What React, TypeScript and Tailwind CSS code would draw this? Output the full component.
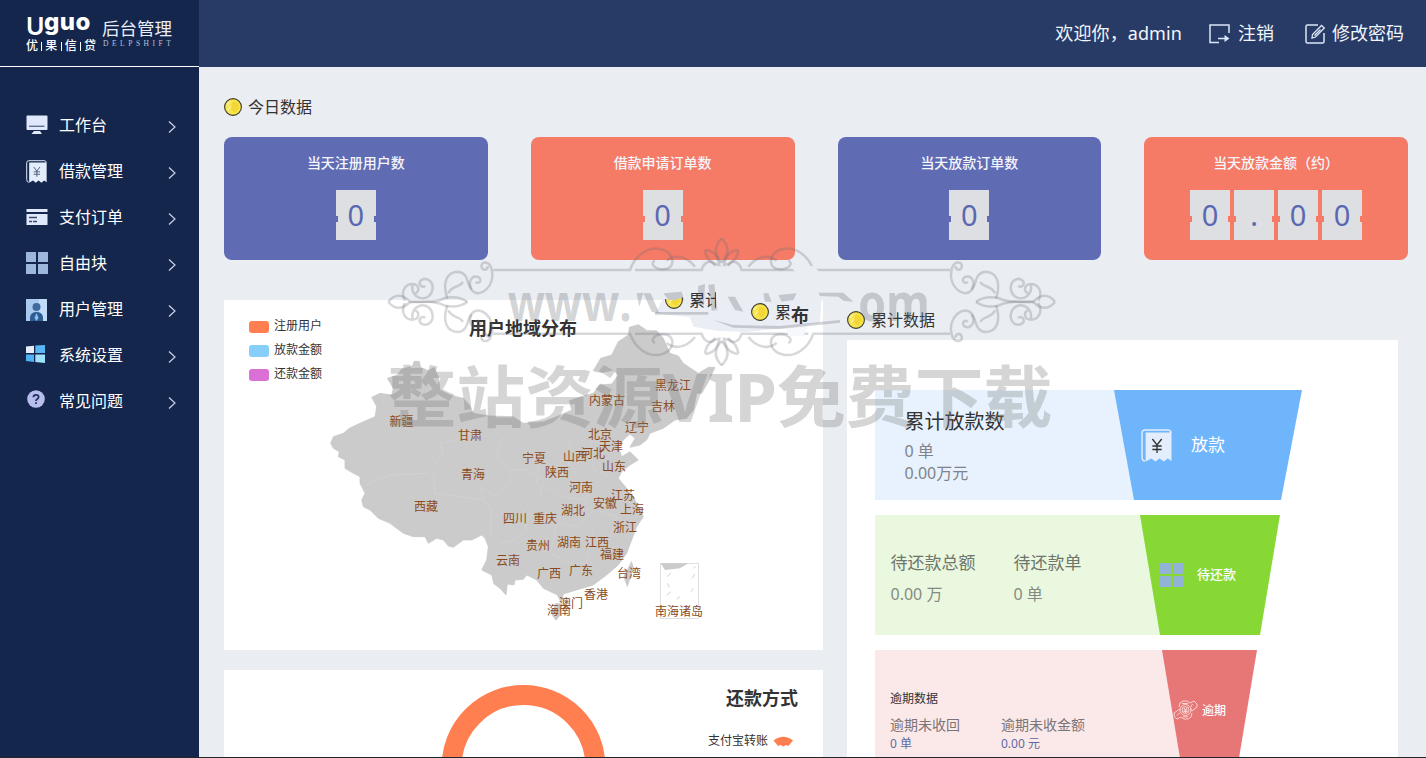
import React from "react";

type IconName = "monitor" | "receipt" | "card" | "blocks" | "user" | "windows" | "help";

const menu: { label: string; icon: IconName }[] = [
  { label: "工作台", icon: "monitor" },
  { label: "借款管理", icon: "receipt" },
  { label: "支付订单", icon: "card" },
  { label: "自由块", icon: "blocks" },
  { label: "用户管理", icon: "user" },
  { label: "系统设置", icon: "windows" },
  { label: "常见问题", icon: "help" },
];

function Receipt({ size, ink }: { size: number; ink: string }) {
  return (
    <svg width={size} height={size + 2} viewBox="0 0 30 33" preserveAspectRatio="none">
      <path d="M4 32 Q1 32 1 28 V4 Q1 1 4 1 H26 Q29 1 29 4" fill="none" stroke="#e3edfb" strokeWidth="1.4" />
      <path d="M4.500 3.500 H29.500 V32 L26 29.500 L22 32.500 L18 29.500 L14 32.500 L10 29.500 L4.500 32.500 Z" fill="#e3edfb" />
      <path d="M11 10 L15.500 16 L20 10 M15.500 16 V24 M11 17 H20 M11 20.500 H20" fill="none" stroke={ink} strokeWidth="1.3" />
    </svg>
  );
}

function MenuIcon({ name }: { name: IconName }) {
  switch (name) {
    case "monitor":
      return (
        <svg width="22" height="20" viewBox="0 0 22 20">
          <rect x="0.500" y="0.500" width="21" height="14.500" rx="1" fill="#dfe9fb" />
          <path d="M3 11.300 H18.500" stroke="#5f7395" strokeWidth="1.400" />
          <path d="M8 16 H14 L16 19 H5.500 Z" fill="#dfe9fb" />
        </svg>
      );
    case "receipt":
      return <Receipt size={21} ink="#4a5670" />;
    case "card":
      return (
        <svg width="22" height="18" viewBox="0 0 22 18">
          <rect x="0.500" y="1" width="21" height="3" fill="#dfe9fb" />
          <rect x="0.500" y="6" width="21" height="11" fill="#dfe9fb" />
          <path d="M3 9.500 H11 M3 13.500 H6 M7 13.500 H11" stroke="#3b4a6b" strokeWidth="1.500" />
        </svg>
      );
    case "blocks":
      return <Blocks size={22} color="#9cb6dc" />;
    case "user":
      return (
        <svg width="21" height="22" viewBox="0 0 21 22" className="mt-px">
          <rect width="21" height="22" fill="#a9c9ee" />
          <rect x="13" width="8" height="22" fill="#c2dbf6" />
          <circle cx="10.500" cy="8" r="4" fill="#3e6a9e" />
          <path d="M4 22 V18 Q5 13 10.500 13 Q16 13 17 18 V22 Z" fill="#2f5c93" />
          <path d="M10.500 14 L12.500 19 L10.500 22 L8.500 19 Z" fill="#8cc2f5" />
        </svg>
      );
    case "windows":
      return (
        <svg width="19" height="18" viewBox="0 0 19 18" className="-mt-[2px]">
          <path d="M0 1.500 L8 0.800 V8 H0 Z" fill="#e6eefb" />
          <path d="M9.300 0.600 L19 0 V8 H9.300 Z" fill="#59b7f5" />
          <path d="M0 9.500 H8 V17 L0 16 Z" fill="#4fb2f5" />
          <path d="M9.300 9.500 H19 V18 L9.300 17 Z" fill="#9fe0fb" />
        </svg>
      );
    case "help":
      return (
        <svg width="20" height="22" viewBox="0 0 20 22" className="-mt-[3px]">
          <circle cx="10" cy="10" r="8.800" fill="#b7bdec" />
          <path d="M7.400 8.300 Q7.400 5.800 10 5.800 Q12.600 5.800 12.600 8 Q12.600 9.300 11 10.200 Q10 10.800 10 12 M10 13.300 V15" fill="none" stroke="#25315f" strokeWidth="1.800" />
        </svg>
      );
  }
}

function Blocks({ size, color }: { size: number; color: string }) {
  return (
    <svg width={size} height={size} viewBox="0 0 22 22" fill={color}>
      <rect width="10" height="10" />
      <rect x="12" width="10" height="10" />
      <rect y="12" width="10" height="10" />
      <rect x="12" y="12" width="10" height="10" />
    </svg>
  );
}

function Coin() {
  return (
    <svg width="18" height="18" viewBox="0 0 18 18" className="shrink-0">
      <circle cx="9" cy="9" r="8.400" fill="#f8e44e" stroke="#3c3b2e" strokeWidth="1.100" />
      <path d="M9 3 L14 5 L15 10 L11 15 L6 11 Z" fill="#f4d735" />
      <path d="M3 7 L6 3.500 M4 12 L7 8" stroke="#faf0a0" strokeWidth="1.500" />
    </svg>
  );
}

const stats = [
  { label: "当天注册用户数", digits: ["0"], blue: true },
  { label: "借款申请订单数", digits: ["0"], blue: false },
  { label: "当天放款订单数", digits: ["0"], blue: true },
  { label: "当天放款金额（约）", digits: ["0", ".", "0", "0"], blue: false },
];

function StatCard({ label, digits, blue }: (typeof stats)[number]) {
  const notch = blue ? "mt-1 h-[6px] w-[2px] bg-[#5f6cb4]" : "mt-1 h-[6px] w-[2px] bg-[#f57b66]";
  return (
    <div className={blue ? "flex h-[123px] flex-col items-center rounded-lg bg-[#5f6cb4] pt-4" : "flex h-[123px] flex-col items-center rounded-lg bg-[#f57b66] pt-4"}>
      <div className="text-[14px] leading-5 font-medium text-[#f4f5fb]">{label}</div>
      <div className="mt-[17px] flex gap-1">
        {digits.map((d, i) => (
          <div key={i} className="flex h-[50px] w-10 items-center justify-between bg-[#dddfe2] pt-[3px] text-[29px] leading-none text-[#5a68b2]">
            <span className={notch} />
            <span className="-mt-[5px]">{d}</span>
            <span className={notch} />
          </div>
        ))}
      </div>
    </div>
  );
}

const provinces: [string, number, number][] = [
  ["新疆", 401.5, 421], ["甘肃", 470, 435], ["青海", 473, 474], ["西藏", 426, 506],
  ["宁夏", 534, 458], ["陕西", 557, 472], ["山西", 575, 456], ["河北", 593, 453],
  ["北京", 600, 434], ["天津", 611, 446], ["山东", 614, 466], ["河南", 581, 487],
  ["江苏", 623, 495], ["安徽", 605, 503], ["上海", 632, 509], ["湖北", 573, 510],
  ["四川", 515, 518], ["重庆", 545, 518], ["浙江", 625, 527], ["湖南", 569, 542],
  ["江西", 597, 542], ["贵州", 538, 545], ["福建", 612, 554], ["云南", 508, 560],
  ["广西", 549, 573], ["广东", 581, 570], ["台湾", 629, 573], ["香港", 596, 594],
  ["澳门", 571, 603], ["海南", 559, 610], ["南海诸岛", 679, 611], ["黑龙江", 673, 385],
  ["内蒙古", 607, 400], ["吉林", 663, 406], ["辽宁", 637, 427],
];

const mainland =
  "62,400 70,380 100,370 118,355 160,335 195,320 200,290 185,262 210,250 245,255 250,235 232,205 262,195 275,178 308,168 312,154 328,154 332,172 355,182 372,172 385,200 390,240 420,255 460,265 478,285 490,310 540,318 610,320 640,340 700,335 740,320 785,300 778,272 820,258 850,250 868,225 905,222 925,195 910,180 875,188 850,182 872,145 905,135 925,95 955,75 958,52 985,44 1012,62 1040,62 1060,85 1080,130 1105,138 1120,160 1165,190 1195,172 1215,172 1195,215 1175,250 1160,250 1150,300 1130,325 1095,330 1060,355 1020,370 1010,390 990,405 960,412 975,385 960,372 940,390 925,410 935,440 960,425 985,450 960,465 935,485 925,505 950,535 970,560 985,590 1000,620 980,650 965,690 950,730 925,765 890,795 850,825 800,840 760,852 755,880 742,855 700,835 680,810 650,795 640,808 615,810 612,825 592,822 588,855 570,835 552,822 545,795 515,780 530,750 535,710 525,685 515,675 485,690 460,690 430,712 415,708 400,690 380,685 355,700 345,680 310,680 280,670 240,640 205,625 180,600 160,590 155,570 165,550 150,520 150,500 130,490 105,475 105,450 85,440 88,425 70,415";

function RegionMap() {
  return (
    <svg className="absolute inset-0" width="599" height="350" viewBox="224 300 599 350">
      <g transform="translate(310 310) scale(0.333333)">
        <polygon points={mainland} fill="#cbcbcb" stroke="#c6c6c6" strokeWidth="2" />
        <path d="M735 880 L755 880 L752 915 L738 932 L725 915 Z M965 752 L972 775 L952 832 L940 800 Z" fill="#cbcbcb" />
        <g fill="none" stroke="#d3d3d3" strokeWidth="2">
          <path d="M165 525 L240 495 L350 490 L370 465 L400 430 L390 400 L440 390 L490 340" />
          <path d="M370 490 L375 550 L450 560 L520 570 L510 530 L560 560 L610 500 L560 440 L580 380" />
          <path d="M540 690 L545 600 L520 570 M600 480 L650 480 L700 510 L690 560 L640 600 L650 660 L610 690 L570 700" />
          <path d="M690 420 L680 520 L760 560 L830 570 L850 510 M740 640 L810 650 L850 600 M740 640 L720 730 L780 760 L830 760 L850 650" />
          <path d="M780 390 L775 480 M840 380 L850 480 L900 500 M860 600 L920 620 L900 680 L870 740" />
        </g>
        <rect x="1051" y="760" width="114" height="165" fill="none" stroke="#cfcfcf" strokeWidth="2" />
        <path d="M1052 760 H1135 L1110 775 L1065 780 Z" fill="#cbcbcb" />
        <path d="M1083 788 L1072 800 M1072 820 L1078 832 M1083 845 L1070 856 M1100 868 L1110 860 M1143 845 L1150 835 M1146 805 L1155 792 M1150 775 L1157 768" stroke="#d0d0d0" strokeWidth="3" />
      </g>
      {provinces.map(([name, x, y]) => (
        <text key={name} x={x} y={y + 4.5} textAnchor="middle" fontSize="12" fill="#8b4a1c">
          {name}
        </text>
      ))}
    </svg>
  );
}

function Corner() {
  return (
    <g>
      <path d="M25 215 Q55 180 90 215" />
      <path d="M90 215 H130 Q165 218 195 204 Q235 196 262 215" />
      <path d="M75 212 C60 185 75 162 98 162 C118 163 120 184 106 190 M98 162 C88 205 140 220 155 187 C166 156 142 140 124 150 C113 159 122 175 136 168" />
      <path d="M202 205 C185 155 202 125 235 125 C268 131 258 160 275 180 C297 208 348 170 335 118 C328 90 300 94 305 112 C310 124 324 120 323 108" />
      <path d="M205 190 C215 165 245 172 248 155 M275 178 C262 155 276 132 297 142 C308 152 294 165 287 155" />
    </g>
  );
}

function Arches() {
  return (
    <g>
      <path d="M340 120 H750 C765 75 805 50 840 57 C885 64 890 118 850 118 C820 118 810 98 825 92" />
      <path d="M860 92 C890 68 925 85 945 110 M765 120 H965 C972 95 995 85 1005 108" />
      <path d="M975 60 Q1010 60 1018 105 Q980 100 975 60" />
      <path d="M1025 25 Q990 60 1025 98" />
    </g>
  );
}

function Quarter() {
  return (
    <g>
      <Corner />
      <Arches />
    </g>
  );
}

function Watermark() {
  return (
    <svg className="pointer-events-none absolute top-[230px] left-[380px]" width="700" height="210" viewBox="0 0 2100 630">
      <path d="M850 205 L825 250 L930 262 L940 290 L1010 302 L1100 306 L1230 292 L1320 278 L1325 200 Z" fill="#eaedf4" />
      <g fill="none" stroke="#6b6f75" strokeOpacity="0.27" strokeWidth="7.500">
        <Quarter />
        <g transform="translate(2050 0) scale(-1 1)"><Quarter /></g>
        <g transform="translate(0 431) scale(1 -1)"><Quarter /></g>
        <g transform="translate(2050 431) scale(-1 -1)"><Quarter /></g>
      </g>
      <path d="M1235 110 L1300 108 L1315 122 L1320 140 L1250 135 Z" fill="#eaedf2" />
      <path d="M1218 290 L1285 285 L1270 318 L1225 318 Z" fill="#f7f8fb" />
      <g fill="#666a70" fillOpacity="0.29">
        <text x="383" y="272" fontSize="156" fontWeight="700" textLength="372" lengthAdjust="spacingAndGlyphs" fontFamily="Open Sans, sans-serif">www.</text>
        <text x="1435" y="272" fontSize="156" fontWeight="700" textLength="215" lengthAdjust="spacingAndGlyphs" fontFamily="Open Sans, sans-serif">om</text>
        <path d="M770 190 L790 188 L778 230 Z M790 190 L812 190 L838 250 L815 245 Z M850 190 L905 185 L912 210 L870 215 Z M955 168 L975 162 L972 225 L952 225 Z M985 165 L1003 162 L1012 240 L995 242 Z" />
        <path d="M1043 200 L1065 200 L1090 245 L1065 240 Z M1150 190 L1165 190 L1175 215 L1155 215 Z M1195 195 L1250 190 L1240 210 L1205 215 Z M1315 188 L1390 188 L1420 215 L1390 212 L1375 200 L1320 198 Z" />
        <path d="M825 246 H985 V254 H825 Z M1000 270 L1060 285 L1200 288 L1380 270 V278 L1200 297 L1060 293 Z" />
      </g>
      <text x="22" y="575" fontSize="200" fontWeight="700" fill="#777777" fillOpacity="0.31" textLength="1995" lengthAdjust="spacingAndGlyphs">整站资源VIP免费下载</text>
    </svg>
  );
}

const legend = [
  { label: "注册用户", swatch: "h-3 w-5 rounded-[3px] bg-[#ff7f50]" },
  { label: "放款金额", swatch: "h-3 w-5 rounded-[3px] bg-[#87cefa]" },
  { label: "还款金额", swatch: "h-3 w-5 rounded-[3px] bg-[#da70d6]" },
];

export default function App() {
  return (
    <div className="relative flex h-[758px] w-[1426px] overflow-hidden bg-[#eaedf2] font-['Noto_Sans','Noto_Sans_CJK_SC',sans-serif] text-[#333]">
      <aside className="flex w-[199px] shrink-0 flex-col bg-[#15264d] text-white">
        <div className="flex h-[67px] shrink-0 border-b border-white pt-[17px] pl-[26px]">
          <div className="w-[70px]">
            <div className="flex h-[20px] overflow-hidden font-['Inter',sans-serif] text-[24px] leading-[20px] font-extrabold">
              <span className="-mt-px w-[18px] text-[25px] font-semibold">U</span>
              <span className="-mt-[5px] tracking-[0.5px]">guo</span>
            </div>
            <div className="mt-px flex items-center justify-between text-[12px] leading-4 font-medium whitespace-nowrap">
              <span>优</span><i className="h-[9px] w-px bg-white" /><span>果</span><i className="h-[9px] w-px bg-white" /><span>信</span><i className="h-[9px] w-px bg-white" /><span>贷</span>
            </div>
          </div>
          <div className="ml-[6px] w-[72px]">
            <div className="text-[17.5px] leading-[22px] whitespace-nowrap text-[#e9eef8]">后台管理</div>
            <div className="flex justify-between pr-[3px] pl-px font-['Liberation_Serif',serif] text-[7.5px] leading-[10px] text-[#b9c3da]">
              {"DELPSHIFT".split("").map((c, i) => <span key={i}>{c}</span>)}
            </div>
          </div>
        </div>
        <nav className="flex flex-col pt-[35px]">
          {menu.map((m) => (
            <div key={m.label} className="flex h-[46px] items-center pr-[23px] pl-[26px]">
              <span className="w-[33px]"><MenuIcon name={m.icon} /></span>
              <span className="flex-1 text-[16px] leading-6">{m.label}</span>
              <svg width="8" height="14" viewBox="0 0 8 14" className="mt-[3px]">
                <path d="M1 1.500 L7 7 L1 12.500" fill="none" stroke="#c9d2e6" strokeWidth="1.200" />
              </svg>
            </div>
          ))}
        </nav>
      </aside>

      <div className="flex min-w-0 flex-1 flex-col">
        <header className="flex h-[67px] shrink-0 items-center justify-end bg-[#283b67] pr-[22px] text-[18px] text-[#f2f6fc]">
          <span className="tracking-[0.1px]">欢迎你，admin</span>
          <svg width="22" height="20" viewBox="0 0 22 20" className="ml-[27px]" fill="none" stroke="#dbe6f8" strokeWidth="1.500">
            <path d="M10 18.500 H1 V1 H20 V9" />
            <path d="M9 14.500 H17" />
            <path d="M15.500 11 L20.500 14.500 L15.500 18 Z" fill="#dbe6f8" stroke="none" />
          </svg>
          <span className="ml-[7px]">注销</span>
          <svg width="21" height="20" viewBox="0 0 21 20" className="ml-[31px]" fill="none" stroke="#dbe6f8" strokeWidth="1.500">
            <path d="M13 1 H2.500 Q1 1 1 2.500 V17.500 Q1 19 2.500 19 H17.500 Q19 19 19 17.500 V9" />
            <path d="M7 14 L7.500 10.500 L16.500 1.500 L19.300 4 L10.500 13 Z M9.500 11.500 L15.500 5.500" strokeWidth="1.300" />
          </svg>
          <span className="ml-[6px]">修改密码</span>
        </header>

        <main className="flex flex-1 flex-col pr-[18px] pl-[25px]">
          <div className="flex h-[70px] items-center gap-[6px] pt-[10px] text-[16px]">
            <Coin />
            <span>今日数据</span>
          </div>
          <section className="grid grid-cols-4 gap-[43px]">
            {stats.map((s) => <StatCard key={s.label} {...s} />)}
          </section>

          <section className="mt-10 flex gap-6">
            <div className="flex w-[599px] flex-col gap-5">
              <div className="relative h-[350px] bg-white">
                <RegionMap />
                <h2 className="relative pt-[14px] pr-px text-center text-[18px] leading-7 font-bold">用户地域分布</h2>
                <ul className="absolute top-[15px] left-[25px] text-[12px]">
                  {legend.map((l) => (
                    <li key={l.label} className="flex h-6 items-center gap-[5px]">
                      <span className={l.swatch} />
                      <span className="-mt-[3px] leading-5">{l.label}</span>
                    </li>
                  ))}
                </ul>
              </div>
              <div className="relative h-[88px] bg-white">
                <svg className="absolute inset-0" width="599" height="88" viewBox="224 670 599 88">
                  <circle cx="523.500" cy="767" r="72" fill="none" stroke="#ff7f50" strokeWidth="20" />
                  <path d="M773.500 740.500 Q783.500 733 793 740.500 L788.500 746 L786 745 L783.500 746.500 L780.500 745 L778 746 Z" fill="#ff7f50" />
                </svg>
                <div className="relative flex flex-col items-end pt-[14px]">
                  <h2 className="mr-[25px] text-[18px] leading-7 font-bold">还款方式</h2>
                  <span className="mt-[19px] mr-[55px] text-[12px] leading-5">支付宝转账</span>
                </div>
              </div>
            </div>

            <div className="flex w-[551px] flex-col">
              <div className="flex h-10 items-center gap-[6px] text-[16px]">
                <Coin />
                <span>累计数据</span>
              </div>
              <div className="flex h-[418px] flex-col gap-[15px] bg-white pt-[50px] pl-7">
                <div className="flex h-[110px] shrink-0">
                  <div className="w-[259px] bg-[#e7f2fe] pt-[18px] pl-[29.5px] text-[16px] leading-[22px] text-[#808389]">
                    <h3 className="mb-1 text-[20px] leading-7 text-[#333]">累计放款数</h3>
                    <p>0 单</p>
                    <p>0.00万元</p>
                  </div>
                  <div className="-ml-5 flex w-[188px] items-center bg-[#6fb5fb] pl-[27px] text-white [clip-path:polygon(0_0,100%_0,167px_100%,20px_100%)]">
                    <Receipt size={31} ink="#333" />
                    <span className="ml-[19px] text-[17px]">放款</span>
                  </div>
                </div>
                <div className="flex h-[120px] shrink-0">
                  <div className="flex w-[285px] bg-[#ebf8e0] pt-[33px] pl-[15.5px] text-[#6f766b]">
                    <div className="w-[123px]">
                      <p className="text-[17px] leading-[30px]">待还款总额</p>
                      <p className="mt-px text-[16px] leading-[30px] text-[#858b82]">0.00 万</p>
                    </div>
                    <div>
                      <p className="text-[17px] leading-[30px]">待还款单</p>
                      <p className="mt-px text-[16px] leading-[30px] text-[#858b82]">0 单</p>
                    </div>
                  </div>
                  <div className="-ml-5 flex w-[140px] items-center bg-[#88d835] pl-5 text-white [clip-path:polygon(0_0,100%_0,120px_100%,20px_100%)]">
                    <Blocks size={24} color="#93b2d8" />
                    <span className="ml-[13px] text-[13px] font-medium">待还款</span>
                  </div>
                </div>
                <div className="flex h-[120px] shrink-0">
                  <div className="w-[307px] bg-[#fbe9ea] pt-[39px] pl-[15px]">
                    <p className="mb-[6px] text-[12px] leading-5">逾期数据</p>
                    <div className="flex text-[14px] leading-5 text-[#7c7477]">
                      <div className="w-[111px]">
                        <p>逾期未收回</p>
                        <p className="mt-px text-[12px] leading-4 text-[#5f6aa0]">0 单</p>
                      </div>
                      <div>
                        <p>逾期未收金额</p>
                        <p className="mt-px text-[12px] leading-4 text-[#5f6aa0]">0.00 元</p>
                      </div>
                    </div>
                  </div>
                  <div className="-ml-5 flex w-[95px] items-center bg-[#e77676] pl-[11px] text-white [clip-path:polygon(0_0,100%_0,75px_100%,20px_100%)]">
                    <svg width="25" height="22" viewBox="0 0 25 22" fill="none" stroke="#fbdcdc" strokeWidth="0.900">
                      <circle cx="12.500" cy="11" r="5.500" />
                      <circle cx="12.500" cy="11" r="3.500" />
                      <path d="M10.500 11 H14.500 M10.500 12.500 H14.500 M10.800 8.500 L12.500 11 L14.200 8.500 M12.500 11 V14" />
                      <path d="M6 8 L7 4 L10 2 L14 2 L17 4 L21 2 L24 5 L24 8 L19 12 L17.500 9 M7 10 L1 14 L1.500 18 L4 20 L8 18 L11 20 L15 20 L18 18 L19 14" />
                      <path d="M9 4.500 H15 M10 17.800 H15 M19.500 5 L18 8 M4 16.500 L7 13.500" />
                    </svg>
                    <span className="mt-[2px] ml-1 text-[12px] font-medium">逾期</span>
                  </div>
                </div>
              </div>
            </div>
          </section>
        </main>
      </div>

      <Watermark />
      <div className="absolute top-[291px] left-[665px] flex h-[20px] w-[51px] gap-[6px] overflow-hidden text-[16px] leading-[20px] whitespace-nowrap">
        <span className="[clip-path:polygon(0_40%,55%_48%,100%_30%,100%_100%,0_100%)]"><Coin /></span>
        <span className="-mt-px">累计</span>
      </div>
      <div className="absolute top-[303px] left-[751px] flex gap-[6px] whitespace-nowrap">
        <Coin />
        <span className="text-[16px] leading-[18px]">累</span>
        <b className="-ml-[6px] text-[18px] leading-[25px]">布</b>
      </div>
      <div className="absolute bottom-0 left-0 h-px w-full bg-[#23252c]" />
    </div>
  );
}
